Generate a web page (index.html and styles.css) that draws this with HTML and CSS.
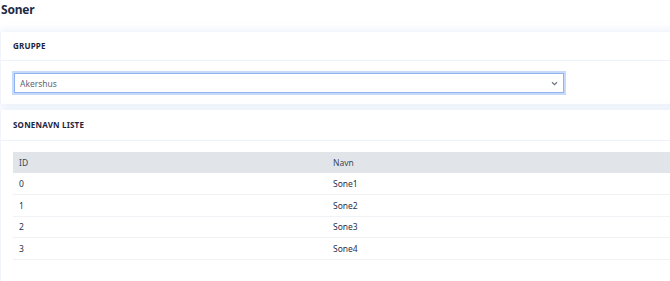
FILE: index.html
```html
<!DOCTYPE html>
<html lang="no">
<head>
    <meta charset="UTF-8">
    <meta name="viewport" content="width=device-width, initial-scale=1.0">
    <title>Soner</title>
    <link rel="stylesheet" href="styles.css">
</head>
<body>
    <h1 class="page-title">Soner</h1>

    <!-- Gruppe -->
    <div class="card">
        <div class="card-header">Gruppe</div>
        <div class="card-body">
            <div class="select-box">
                <span>Akershus</span>
                <svg class="chevron" width="7" height="5" viewBox="0 0 7 5">
                    <path d="M1 1.2 L3.5 3.6 L6 1.2" fill="none" stroke="#6b7385" stroke-width="1.2"/>
                </svg>
            </div>
        </div>
    </div>

    <!-- Sonenavn liste -->
    <div class="card card-list">
        <div class="card-header">Sonenavn liste</div>
        <div class="card-body">
            <table class="zone-table">
                <thead>
                    <tr>
                        <th class="col-id">ID</th>
                        <th>Navn</th>
                    </tr>
                </thead>
                <tbody>
                    <tr><td>0</td><td>Sone1</td></tr>
                    <tr><td>1</td><td>Sone2</td></tr>
                    <tr><td>2</td><td>Sone3</td></tr>
                    <tr><td>3</td><td>Sone4</td></tr>
                </tbody>
            </table>
        </div>
    </div>
</body>
</html>
```

FILE: styles.css
```css
/* Global */
body {
    margin: 0;
    font-family: 'Noto Sans', sans-serif;
    background: #fff;
    color: #1c2640;
    width: 720px;
    height: 281px;
    overflow: hidden;
}

.page-title {
    margin: 0;
    padding: 1px 1px 0;
    font-size: 12px;
    line-height: 18px;
    font-weight: 700;
    letter-spacing: -0.2px;
    color: #1d2b47;
    height: 25px;
}

/* Cards */
.card {
    background: #fff;
    margin-top: 6px;
    box-shadow: 0 0 10px rgba(70, 110, 210, 0.14);
    border-left: 1px solid #f1f4fa;
}

.card-header {
    height: 28px;
    line-height: 28px;
    padding: 0 12px;
    font-size: 8px;
    font-weight: 700;
    text-transform: uppercase;
    letter-spacing: 0.2px;
    color: #1a2540;
    border-bottom: 1px solid #edf1f8;
}

.card-body {
    padding: 10px 12px 9px;
}

.card-list {
    height: 200px;
}

.card-list .card-header {
    height: 30px;
    line-height: 30px;
}

.card-list .card-body {
    padding-top: 11px;
}

/* Select */
.select-box {
    box-sizing: border-box;
    width: 550px;
    height: 20px;
    display: flex;
    align-items: center;
    justify-content: space-between;
    padding: 0 5px 0 5px;
    border: 1px solid #8fb2f1;
    box-shadow: 0 0 0 2px #c7daf9;
    margin: 2px 0 2px 1px;
    font-size: 8.5px;
    color: #5d6679;
}

.chevron {
    margin-top: 1px;
}

/* Table */
.zone-table {
    width: 700px;
    border-collapse: collapse;
    font-size: 8.5px;
    color: #27314a;
}

.zone-table th {
    background: #e1e5ea;
    font-weight: 400;
    color: #3c4659;
    text-align: left;
    height: 21px;
    padding: 0 6px;
}

.zone-table .col-id {
    width: 302px;
}

.zone-table td {
    height: 20.8px;
    padding: 0 6px;
    border-bottom: 1px solid #f0f2f6;
}
```
